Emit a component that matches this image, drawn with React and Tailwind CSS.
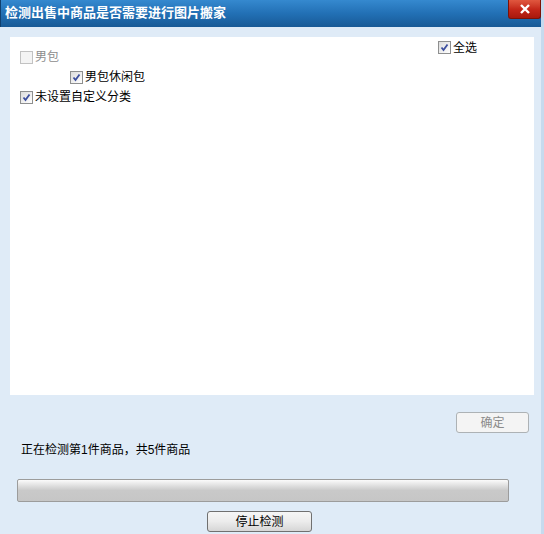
import React from 'react';

const Box = ({ checked, disabled }) => (
  <span
    className={
      'inline-flex w-[13px] h-[13px] shrink-0 items-center justify-center border ' +
      (disabled
        ? 'border-[#c2c2c2] bg-[#f4f4f4]'
        : 'border-[#8e8f8f] bg-gradient-to-br from-[#dcdcdc] to-[#ffffff]')
    }
  >
    {checked && (
      <svg width="9" height="9" viewBox="0 0 9 9">
        <path d="M1.5 4.5 L3.5 7 L7.5 1.5" fill="none" stroke="#3c4e9e" strokeWidth="1.8" />
      </svg>
    )}
  </span>
);

const Row = ({ label, checked, disabled, indent }) => (
  <div className={'flex items-center h-[20px] gap-[2px] ' + (indent ? 'ml-[50px]' : '')}>
    <Box checked={checked} disabled={disabled} />
    <span className={disabled ? 'text-[#8d8d8d]' : 'text-black'}>{label}</span>
  </div>
);

export default function App() {
  return (
    <div
      className="w-[544px] h-[534px] bg-[#dfebf7] flex flex-col text-[12px] leading-[16px] border-r-[3px] border-[#c6daee] overflow-hidden"
      style={{ fontFamily: '"Liberation Sans", "Noto Sans CJK SC", sans-serif' }}
    >
      {/* title bar */}
      <div className="h-[27px] shrink-0 flex items-start bg-gradient-to-b from-[#3589cf] via-[#2270b5] to-[#185a96] border-l border-[#0f3f6e]">
        <div className="pl-[4px] pt-[5px] text-white font-bold text-[13px] leading-[16px] flex-1">
          检测出售中商品是否需要进行图片搬家
        </div>
        <div className="w-[33px] h-[19px] flex items-center justify-center bg-gradient-to-b from-[#e0573f] via-[#c5281a] to-[#a8180c] border border-t-0 border-[#7d1207] rounded-b-[3px]">
          <svg width="12" height="10" viewBox="0 0 12 10">
            <path d="M2 1 L10 9 M10 1 L2 9" stroke="#ffffff" strokeWidth="2.4" />
          </svg>
        </div>
      </div>

      {/* list panel */}
      <div className="mt-[10px] ml-[10px] w-[524px] h-[358px] shrink-0 bg-white flex">
        <div className="flex-1 pl-[10px] pt-[10px] flex flex-col">
          <Row label="男包" disabled />
          <Row label="男包休闲包" checked indent />
          <Row label="未设置自定义分类" checked />
        </div>
        <div className="w-[96px] pt-[4px]">
          <div className="flex items-center gap-[2px] h-[13px]">
            <Box checked />
            <span>全选</span>
          </div>
        </div>
      </div>

      <div className="mt-[17px] flex justify-end pr-[12px]">
        <div className="w-[73px] h-[21px] flex items-center justify-center border border-[#adb2b5] rounded-[3px] bg-[#f4f4f4] text-[#8b8b8b]">
          确定
        </div>
      </div>

      <div className="mt-[9px] pl-[21px] h-[16px]">正在检测第1件商品，共5件商品</div>

      <div className="mt-[21px] ml-[17px] w-[492px] h-[23px] border border-[#9c9c9c] rounded-[2px] bg-gradient-to-b from-[#fbfbfb] via-[#c9c9c9] to-[#c6c6c6]"></div>

      <div className="mt-[9px] ml-[207px] w-[105px] h-[21px] flex items-center justify-center border border-[#707070] rounded-[3px] bg-gradient-to-b from-[#f6f6f6] via-[#ececec] to-[#d6d6d6] text-black">
        停止检测
      </div>
    </div>
  );
}
